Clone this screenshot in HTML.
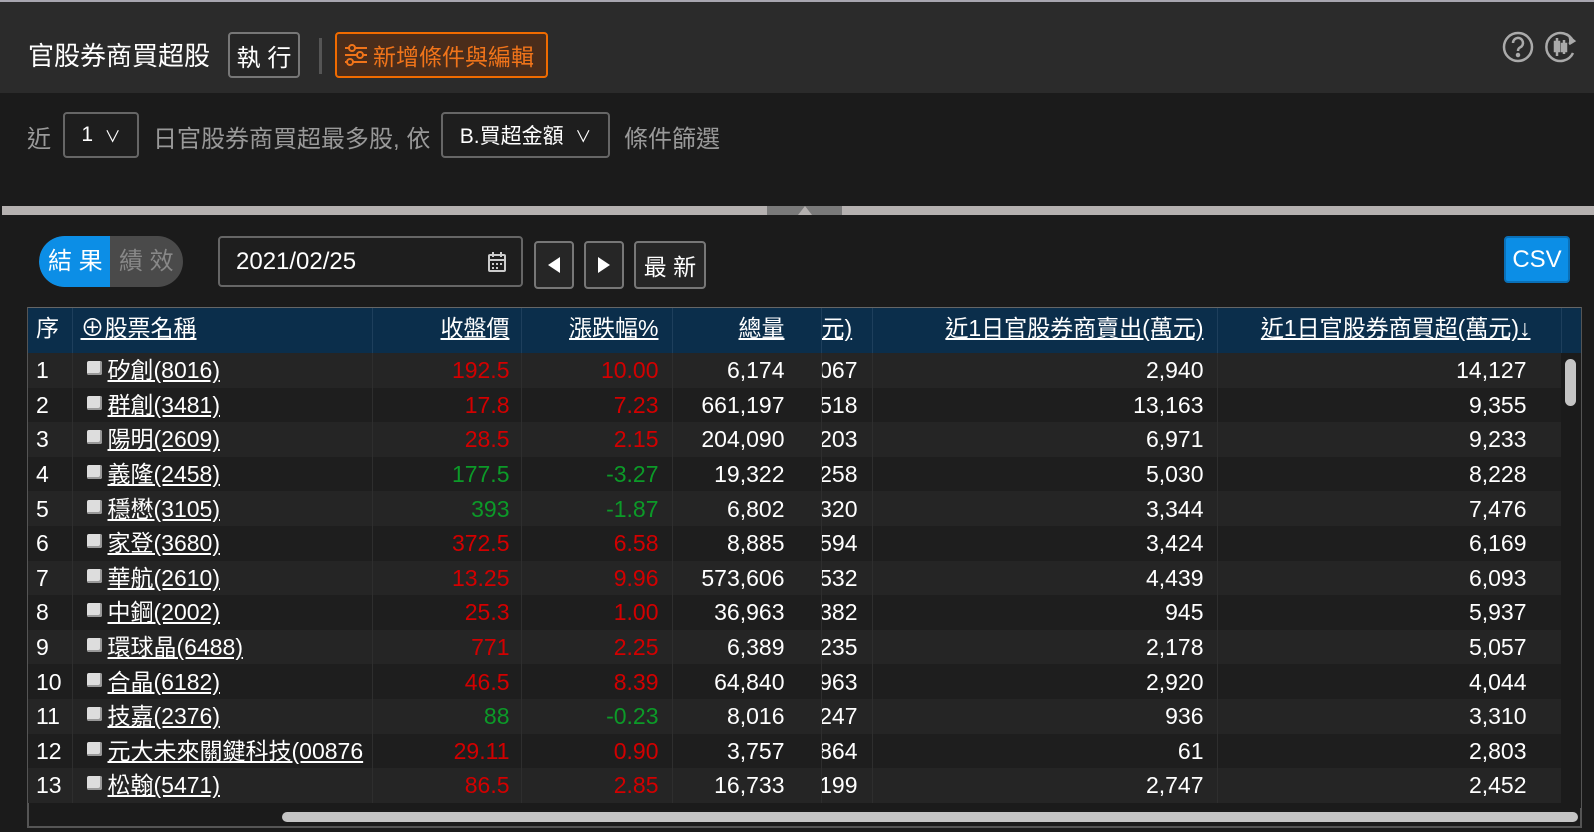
<!DOCTYPE html>
<html><head><meta charset="utf-8"><style>
*{box-sizing:border-box;margin:0;padding:0}
body{width:1594px;height:832px;background:#1b1b1b;font-family:"Liberation Sans","Noto Sans CJK TC",sans-serif;color:#fff;position:relative;overflow:hidden}
.abs{position:absolute}
.top{left:0;top:0;width:1594px;height:93px;background:#2b2b2b;border-top:2px solid #a8a6b0}
.btn{position:absolute;border:2px solid #777;border-radius:4px;background:#262626;color:#fff;display:flex;align-items:center;justify-content:center}
.t{position:absolute;white-space:nowrap}
table{border-collapse:collapse;table-layout:fixed;width:1533px}
td,th{height:34.6px;line-height:30px;font-size:23px;padding:0 8px;white-space:nowrap;overflow:hidden;font-weight:normal;border-right:1px solid #2e2e2e}
th{height:45px;background:#0b2e4b;text-decoration:underline;border-right:1px solid #1e3f5c;padding-bottom:5px}
tr:nth-child(odd) td{background:#1e1e1e}
tr:nth-child(even) td{background:#252525}
.r{text-align:right}.red{color:#d20000}.grn{color:#0c9a28}
.cb{display:inline-block;width:15px;height:14px;background:#ddd;border-radius:2px;vertical-align:3px;margin:0 6px 0 6px;box-shadow:inset -2px -2px 0 #999}
.nm{text-decoration:underline}
.p{padding-right:11px}.q{padding-right:13px}.s{padding-right:13px}
.v{padding-right:36px}
.k{padding:0 14px 0 0;text-align:right;direction:rtl}
.b{padding-right:34px}
</style></head><body>
<div class="abs top"></div>
<div class="t" style="left:28px;top:36px;font-size:26px">官股券商買超股</div>
<div class="btn" style="left:228px;top:32px;width:72px;height:46px;font-size:24px">執 行</div>
<div class="abs" style="left:319px;top:38px;width:3px;height:36px;background:#555"></div>
<div class="btn" style="left:335px;top:32px;width:213px;height:46px;border-color:#f06b00;background:#4a2d1b;color:#f0741a;font-size:23px;justify-content:flex-start;padding-left:6px">
<svg width="26" height="24" viewBox="0 0 26 24" style="margin-right:4px" fill="none" stroke="#f0741a" stroke-width="2"><path d="M2 5h22M2 12h22M2 19h22"/><circle cx="9" cy="5" r="3" fill="#4a2d1b"/><circle cx="17" cy="12" r="3" fill="#4a2d1b"/><circle cx="7" cy="19" r="3" fill="#4a2d1b"/></svg>新增條件與編輯</div>
<svg class="abs" style="left:1502px;top:31px" width="32" height="32" viewBox="0 0 32 32" fill="none" stroke="#aaa" stroke-width="2.5"><circle cx="16" cy="16" r="14"/><path d="M11 12a5 5 0 1 1 7 4.5c-1.5.8-2 1.5-2 3.5"/><circle cx="16" cy="24" r="1" fill="#aaa"/></svg>
<svg class="abs" style="left:1545px;top:31px" width="34" height="32" viewBox="0 0 34 32" fill="none" stroke="#aaa" stroke-width="2.5"><path d="M28 10A14 14 0 1 0 28 22"/><path d="M24 6l5 4-5 3" fill="#aaa"/><path d="M12 7v18M19 9v14"/><rect x="10" y="11" width="4" height="9" fill="#aaa"/><rect x="17" y="13" width="4" height="7" fill="#aaa"/></svg>

<div class="t" style="left:27px;top:119px;font-size:24px;color:#999">近</div>
<div class="btn" style="left:63px;top:112px;width:76px;height:46px;font-size:21px;background:#1e1e1e;border-color:#666">1&nbsp;&nbsp;<span style="font-size:16px">∨</span></div>
<div class="t" style="left:153px;top:119px;font-size:24px;color:#999">日官股券商買超最多股, 依</div>
<div class="btn" style="left:441px;top:112px;width:169px;height:46px;font-size:21px;background:#1e1e1e;border-color:#666">B.買超金額&nbsp;&nbsp;<span style="font-size:16px">∨</span></div>
<div class="t" style="left:624px;top:119px;font-size:24px;color:#999">條件篩選</div>

<div class="abs" style="left:2px;top:206px;width:1592px;height:9px;background:#b5b1b0"></div>
<div class="abs" style="left:767px;top:206px;width:75px;height:9px;background:#7a7a7a"></div>
<div class="abs" style="left:798px;top:206px;width:0;height:0;border-left:7px solid transparent;border-right:7px solid transparent;border-bottom:9px solid #b5b1b0"></div>

<div class="abs" style="left:39px;top:236px;width:144px;height:51px;border-radius:26px;background:#4a4a4a;overflow:hidden">
<div class="abs" style="left:0;top:0;width:71px;height:51px;background:#0c8ee6;border-radius:26px 0 0 26px;font-size:24px;line-height:51px;padding-left:9px">結 果</div>
<div class="abs" style="left:80px;top:0;font-size:24px;line-height:51px;color:#888">績 效</div></div>
<div class="btn" style="left:218px;top:236px;width:305px;height:51px;justify-content:space-between;padding:0 14px 0 16px;font-size:24px;background:#1e1e1e;border-color:#666">2021/02/25
<svg width="20" height="22" viewBox="0 0 20 22" fill="none" stroke="#ccc" stroke-width="2"><rect x="2" y="4" width="16" height="16" rx="1"/><path d="M6 1v5M14 1v5M2 9h16"/><path d="M5 13h2M9 13h2M13 13h2M5 17h2M9 17h2" stroke-width="2"/></svg></div>
<div class="btn" style="left:534px;top:241px;width:40px;height:48px"><svg width="14" height="18"><path d="M13 1v16L1 9z" fill="#fff"/></svg></div>
<div class="btn" style="left:584px;top:241px;width:40px;height:48px"><svg width="14" height="18"><path d="M1 1v16l12-8z" fill="#fff"/></svg></div>
<div class="btn" style="left:634px;top:241px;width:72px;height:48px;font-size:23px">最 新</div>
<div class="abs" style="left:1504px;top:236px;width:66px;height:47px;background:#0c8ee6;border:2px solid #0a70b8;border-radius:4px;font-size:24px;text-align:center;line-height:43px">CSV</div>

<div class="abs" style="left:27px;top:307px;width:1555px;height:521px;border:2px solid #555;border-top:1px solid #666"></div>
<div class="abs" style="left:28px;top:308px;width:1553px;height:45px;background:#0b2e4b"></div>
<table class="abs" style="left:28px;top:308px">
<colgroup><col style="width:44px"><col style="width:300px"><col style="width:149px"><col style="width:151px"><col style="width:149px"><col style="width:51px"><col style="width:345px"><col style="width:344px"></colgroup>
<tr><th style="text-decoration:none;text-align:left">序</th><th style="text-align:left"><span style="text-decoration:none;font-size:24px">⊕</span>股票名稱</th><th class="r p">收盤價</th><th class="r q">漲跌幅%</th><th class="r v">總量</th><th style="text-align:left;padding:0 0 5px 0">元)</th><th class="r s">近1日官股券商賣出(萬元)</th><th class="r" style="padding-right:30px">近1日官股券商買超(萬元)↓</th></tr>
<tr><td>1</td><td><span class="cb"></span><span class="nm">矽創(8016)</span></td><td class="r p red">192.5</td><td class="r q red">10.00</td><td class="r v">6,174</td><td class="k">1,067</td><td class="r s">2,940</td><td class="r b">14,127</td></tr>
<tr><td>2</td><td><span class="cb"></span><span class="nm">群創(3481)</span></td><td class="r p red">17.8</td><td class="r q red">7.23</td><td class="r v">661,197</td><td class="k">5,518</td><td class="r s">13,163</td><td class="r b">9,355</td></tr>
<tr><td>3</td><td><span class="cb"></span><span class="nm">陽明(2609)</span></td><td class="r p red">28.5</td><td class="r q red">2.15</td><td class="r v">204,090</td><td class="k">1,203</td><td class="r s">6,971</td><td class="r b">9,233</td></tr>
<tr><td>4</td><td><span class="cb"></span><span class="nm">義隆(2458)</span></td><td class="r p grn">177.5</td><td class="r q grn">-3.27</td><td class="r v">19,322</td><td class="k">2,258</td><td class="r s">5,030</td><td class="r b">8,228</td></tr>
<tr><td>5</td><td><span class="cb"></span><span class="nm">穩懋(3105)</span></td><td class="r p grn">393</td><td class="r q grn">-1.87</td><td class="r v">6,802</td><td class="k">1,320</td><td class="r s">3,344</td><td class="r b">7,476</td></tr>
<tr><td>6</td><td><span class="cb"></span><span class="nm">家登(3680)</span></td><td class="r p red">372.5</td><td class="r q red">6.58</td><td class="r v">8,885</td><td class="k">5,594</td><td class="r s">3,424</td><td class="r b">6,169</td></tr>
<tr><td>7</td><td><span class="cb"></span><span class="nm">華航(2610)</span></td><td class="r p red">13.25</td><td class="r q red">9.96</td><td class="r v">573,606</td><td class="k">5,532</td><td class="r s">4,439</td><td class="r b">6,093</td></tr>
<tr><td>8</td><td><span class="cb"></span><span class="nm">中鋼(2002)</span></td><td class="r p red">25.3</td><td class="r q red">1.00</td><td class="r v">36,963</td><td class="k">3,382</td><td class="r s">945</td><td class="r b">5,937</td></tr>
<tr><td>9</td><td><span class="cb"></span><span class="nm">環球晶(6488)</span></td><td class="r p red">771</td><td class="r q red">2.25</td><td class="r v">6,389</td><td class="k">2,235</td><td class="r s">2,178</td><td class="r b">5,057</td></tr>
<tr><td>10</td><td><span class="cb"></span><span class="nm">合晶(6182)</span></td><td class="r p red">46.5</td><td class="r q red">8.39</td><td class="r v">64,840</td><td class="k">6,963</td><td class="r s">2,920</td><td class="r b">4,044</td></tr>
<tr><td>11</td><td><span class="cb"></span><span class="nm">技嘉(2376)</span></td><td class="r p grn">88</td><td class="r q grn">-0.23</td><td class="r v">8,016</td><td class="k">2,247</td><td class="r s">936</td><td class="r b">3,310</td></tr>
<tr><td>12</td><td><span class="cb"></span><span class="nm">元大未來關鍵科技(00876</span></td><td class="r p red">29.11</td><td class="r q red">0.90</td><td class="r v">3,757</td><td class="k">2,864</td><td class="r s">61</td><td class="r b">2,803</td></tr>
<tr><td>13</td><td><span class="cb"></span><span class="nm">松翰(5471)</span></td><td class="r p red">86.5</td><td class="r q red">2.85</td><td class="r v">16,733</td><td class="k">3,199</td><td class="r s">2,747</td><td class="r b">2,452</td></tr>
</table>
<div class="abs" style="left:1561px;top:353px;width:20px;height:455px;background:#1b1b1b"></div>
<div class="abs" style="left:1565px;top:359px;width:11px;height:47px;background:#c4c4c4;border-radius:6px"></div>
<div class="abs" style="left:282px;top:812px;width:1296px;height:10px;background:#c4c4c4;border-radius:5px"></div>
</body></html>
